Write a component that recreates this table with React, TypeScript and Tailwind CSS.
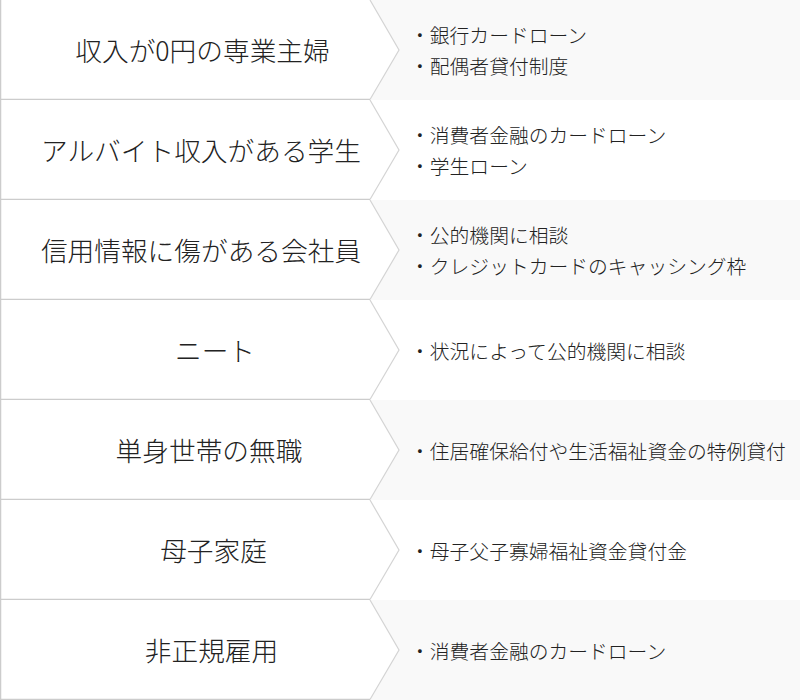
const rows = [
  { label: "収入が0円の専業主婦", pad: "pl-[5px]", items: ["銀行カードローン", "配偶者貸付制度"] },
  { label: "アルバイト収入がある学生", pad: "pl-[2px]", items: ["消費者金融のカードローン", "学生ローン"] },
  { label: "信用情報に傷がある会社員", pad: "pl-[2px]", items: ["公的機関に相談", "クレジットカードのキャッシング枠"] },
  { label: "ニート", pad: "pl-[30px]", items: ["状況によって公的機関に相談"] },
  { label: "単身世帯の無職", pad: "pl-[18px]", items: ["住居確保給付や生活福祉資金の特例貸付"] },
  { label: "母子家庭", pad: "pl-[27px]", items: ["母子父子寡婦福祉資金貸付金"] },
  { label: "非正規雇用", pad: "pl-[23px]", items: ["消費者金融のカードローン"] },
];

function ArrowCell({ label, pad }: { label: string; pad: string }) {
  return (
    <div className="relative h-full w-[400px] shrink-0">
      <svg className="absolute inset-0" width="400" height="100" viewBox="0 0 400 100">
        <polygon points="0,0 370,0 399,50 370,100 0,100" fill="#ffffff" />
        <polyline points="370,0 399,50 370,99.5" fill="none" stroke="#d4d4d4" strokeWidth="1.2" />
        <line x1="0" y1="99.5" x2="370" y2="99.5" stroke="#cccccc" strokeWidth="1.5" />
        <line x1="0.5" y1="0" x2="0.5" y2="100" stroke="#cccccc" strokeWidth="1.5" />
      </svg>
      <div
        className={`relative flex h-full items-center justify-center ${pad} text-[26.7px] font-light text-[#222]`}
      >
        {label}
      </div>
    </div>
  );
}

export default function App() {
  return (
    <div
      className="w-[800px] bg-white"
      style={{ fontFamily: '"Noto Sans CJK JP", "Noto Sans", sans-serif' }}
    >
      {rows.map((row, i) => (
        <div
          key={i}
          className={`flex h-[100px] ${i % 2 === 0 ? "bg-[#f9f9f9]" : "bg-white"}`}
        >
          <ArrowCell label={row.label} pad={row.pad} />
          <ul className="flex flex-col justify-center pl-[10px] text-[19.8px] font-light leading-[31px] text-[#222]">
            {row.items.map((item) => (
              <li key={item}>・{item}</li>
            ))}
          </ul>
        </div>
      ))}
    </div>
  );
}
